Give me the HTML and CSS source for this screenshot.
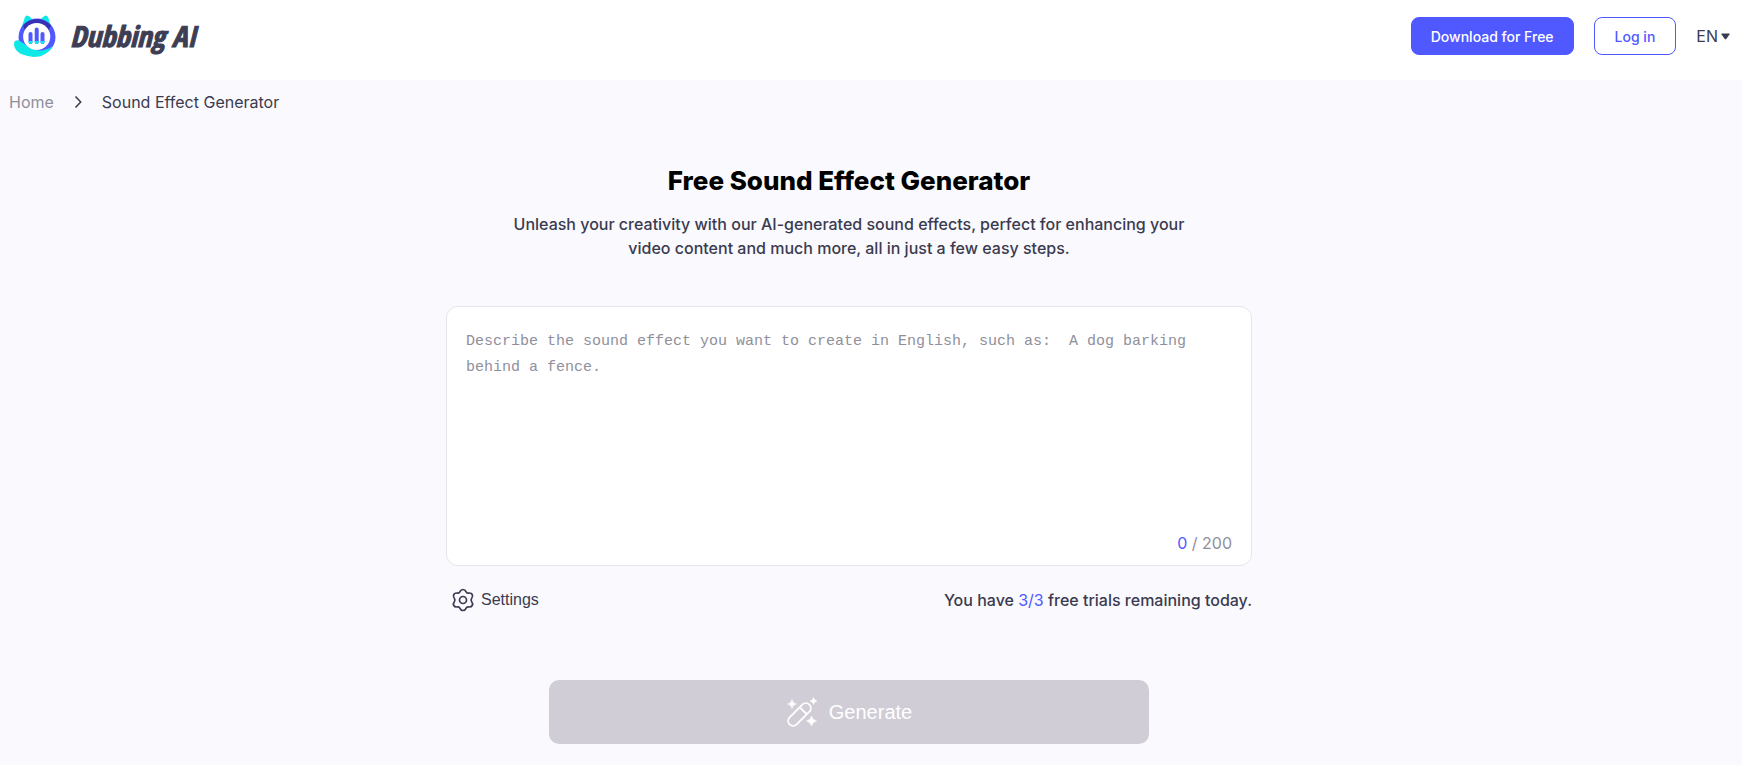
FILE: index.html
```html
<!DOCTYPE html>
<html lang="en">
<head>
<meta charset="utf-8">
<meta name="viewport" content="width=device-width, initial-scale=1">
<title>Free Sound Effect Generator - Dubbing AI</title>
<link rel="stylesheet" href="styles.css">
</head>
<body>
<header class="header">
  <a class="brand" href="#">
    <svg class="brand-mark" viewBox="0 0 42 42" aria-hidden="true">
      <path d="M7 14 11 2Q13-1 16 2L19 5H26L29 2Q32-1 34 2L38 14Z" fill="#0ce9e7"/>
      <circle cx="23" cy="22" r="18.500" fill="#4f59ff"/>
      <path d="M9 10.500A18.500 18.500 0 0 1 37 10.500L33 18H12Z" fill="#3732b5"/>
      <path d="M1 26C4 24 6 26 9 28L16 33C24 37 32 36 39 31C34 39 27 42 20 42C10 41 1 38 0 30Q0 27 1 26Z" fill="#0ce9e7"/>
      <circle cx="22.700" cy="21.500" r="13.600" fill="#fff"/>
      <path d="M16.500 19v8M22.700 14.500v12.500M28.500 19v8" stroke="#4f59ff" stroke-width="4" stroke-linecap="round"/>
      <path d="M14.500 26h4v1a2 2 0 0 1-4 0zM20.700 26h4v1a2 2 0 0 1-4 0zM26.500 26h4v1a2 2 0 0 1-4 0z" fill="#0ce9e7"/>
    </svg>
    <span class="brand-name">Dubbing AI</span>
  </a>
  <div class="actions">
    <button class="btn btn-primary" type="button">Download for Free</button>
    <button class="btn btn-outline" type="button">Log in</button>
    <button class="language" type="button">EN
      <svg class="caret" viewBox="0 0 9 7" aria-hidden="true"><path d="M1 .5h7q1 0 .5 1L5.200 6q-.7.800-1.400 0L.5 1.500Q0 .5 1 .5Z" fill="currentColor"/></svg>
    </button>
  </div>
</header>
<nav class="breadcrumb" aria-label="Breadcrumb">
  <a class="crumb" href="#">Home</a>
  <svg class="chevron" viewBox="0 0 8 12" aria-hidden="true"><path d="M1.500 .5 6.700 6l-5.200 5.500" fill="none" stroke="currentColor" stroke-width="1.500"/></svg>
  <span>Sound Effect Generator</span>
</nav>
<main class="main">
  <h1 class="title">Free Sound Effect Generator</h1>
  <p class="intro">Unleash your creativity with our AI-generated sound effects, perfect for enhancing your video content and much more, all in just a few easy steps.</p>
  <div class="prompt">
    <textarea class="prompt-input" aria-label="Sound effect description" maxlength="200" placeholder="Describe the sound effect you want to create in English, such as:  A dog barking behind a fence."></textarea>
    <p class="counter"><span class="accent">0</span> / 200</p>
  </div>
  <div class="options">
    <button class="settings" type="button">
      <svg class="gear" viewBox="0 0 24 24" aria-hidden="true">
        <path d="M12 1.500c1.500 0 2.400.8 3 2.200.5 1.200 1.400 1.600 2.600 1.400 1.700-.3 2.900.1 3.600 1.400s.5 2.500-.5 3.700c-.8 1.100-.8 2.500 0 3.600 1 1.200 1.200 2.400.5 3.700s-1.900 1.700-3.600 1.400c-1.200-.2-2.100.2-2.600 1.400-.6 1.400-1.500 2.200-3 2.200s-2.400-.8-3-2.200c-.5-1.200-1.400-1.600-2.600-1.400-1.700.3-2.900-.1-3.600-1.400s-.5-2.500.5-3.700c.8-1.100.8-2.500 0-3.600-1-1.200-1.200-2.400-.5-3.700s1.900-1.700 3.600-1.400c1.200.2 2.100-.2 2.600-1.400.6-1.400 1.500-2.200 3-2.200Z" fill="none" stroke="currentColor" stroke-width="1.700"/>
        <circle cx="12" cy="12" r="3.500" fill="none" stroke="currentColor" stroke-width="1.700"/>
      </svg>
      Settings
    </button>
    <p class="trials">You have <span class="trials-count">3/3</span> free trials remaining today.</p>
  </div>
  <button class="generate" type="button" disabled>
    <svg class="wand" viewBox="0 0 32 32" aria-hidden="true">
      <g fill="none" stroke="#fff" stroke-width="1.800">
        <rect x="-5" y="-14" width="10" height="28" rx="5" transform="translate(13.500 18.500) rotate(45)"/>
        <path d="M14 11.500l7 7"/>
      </g>
      <path d="M6 3.500Q6.700 7.300 10.500 8 6.700 8.700 6 12.500 5.300 8.700 1.500 8 5.300 7.300 6 3.500ZM27.500 1.500Q28.100 4.400 31 5 28.100 5.600 27.500 8.500 26.900 5.600 24 5 26.900 4.400 27.500 1.500ZM25.500 20Q26.500 24 30.500 25 26.500 26 25.500 30 24.500 26 20.500 25 24.500 24 25.500 20Z" fill="#fff" stroke="#fff" stroke-width=".5"/>
    </svg>
    Generate
  </button>
</main>
</body>
</html>
```
FILE: styles.css
```css
* {
  box-sizing: border-box;
}

body {
  margin: 0;
  min-height: 100vh;
  background: #f9f9fe;
  color: #3b3b4f;
  font: 16px/24px Inter, "Liberation Sans", sans-serif;
}

button {
  font-family: inherit;
  cursor: pointer;
}

.header {
  display: flex;
  align-items: center;
  justify-content: space-between;
  height: 80px;
  padding: 0 12px 8px 14px;
  background: #fff;
}

.brand {
  display: flex;
  align-items: center;
  gap: 14px;
  color: #3d3d54;
  text-decoration: none;
}

.brand-mark {
  width: 42px;
  height: 42px;
}

.brand-name {
  font: italic bold 29px/40px "Liberation Sans Narrow", "Open Sans Condensed", "Liberation Sans", sans-serif;
  -webkit-text-stroke: 1px currentColor;
}

.actions {
  display: flex;
  align-items: center;
  gap: 20px;
}

.btn {
  height: 38px;
  padding: 0 20px;
  border: 1px solid #4f59ff;
  border-radius: 8px;
  font-size: 14px;
  font-weight: 500;
}

.btn-primary {
  padding: 0 19px;
  background: #4f59ff;
  color: #fff;
}

.btn-outline {
  background: #fff;
  color: #4f59ff;
}

.language,
.settings {
  display: flex;
  align-items: center;
  padding: 0;
  border: 0;
  background: none;
  color: inherit;
  font-size: 16px;
}

.language {
  gap: 3px;
}

.caret {
  width: 9px;
  height: 7px;
}

.breadcrumb {
  display: flex;
  align-items: center;
  gap: 20px;
  padding: 10px 9px;
}

.crumb {
  color: #8f8f9c;
  text-decoration: none;
}

.chevron {
  width: 8px;
  height: 12px;
}

.main {
  display: flex;
  flex-direction: column;
  align-items: center;
  padding: 40px 44px 20px 0;
}

.title {
  margin: 0;
  color: #000;
  font-size: 26px;
  font-weight: 800;
  line-height: 34px;
}

.intro {
  max-width: 700px;
  margin: 14px 0 0;
  font-weight: 500;
  text-align: center;
}

.prompt {
  width: 100%;
  max-width: 806px;
  margin-top: 46px;
  padding: 22px 19px 10px;
  border: 1px solid #e6e6ea;
  border-radius: 12px;
  background: #fff;
}

.prompt-input {
  display: block;
  width: 100%;
  height: 202px;
  padding: 0;
  border: 0;
  outline: 0;
  background: none;
  color: #3b3b4f;
  font: 15px/26px "Liberation Mono", monospace;
  resize: none;
}

.prompt-input::placeholder {
  color: #8f8f9c;
}

.counter {
  margin: 0;
  color: #8f8f9c;
  text-align: right;
}

.accent,
.trials-count {
  color: #4f59ff;
}

.options {
  display: flex;
  align-items: center;
  justify-content: space-between;
  width: 100%;
  max-width: 806px;
  margin-top: 22px;
  padding-left: 5px;
}

.settings {
  gap: 6px;
  font-family: "Liberation Sans", sans-serif;
}

.gear {
  width: 24px;
  height: 24px;
}

.trials {
  margin: 0;
  font-weight: 500;
}

.trials-count {
  font-weight: 400;
}

.generate {
  display: flex;
  align-items: center;
  justify-content: center;
  gap: 11px;
  width: 100%;
  max-width: 600px;
  height: 64px;
  margin-top: 68px;
  border: 0;
  border-radius: 10px;
  background: #d0cdd7;
  color: #fff;
  font: 20px/24px "Liberation Sans", sans-serif;
  cursor: not-allowed;
}

.wand {
  width: 32px;
  height: 32px;
}
```
